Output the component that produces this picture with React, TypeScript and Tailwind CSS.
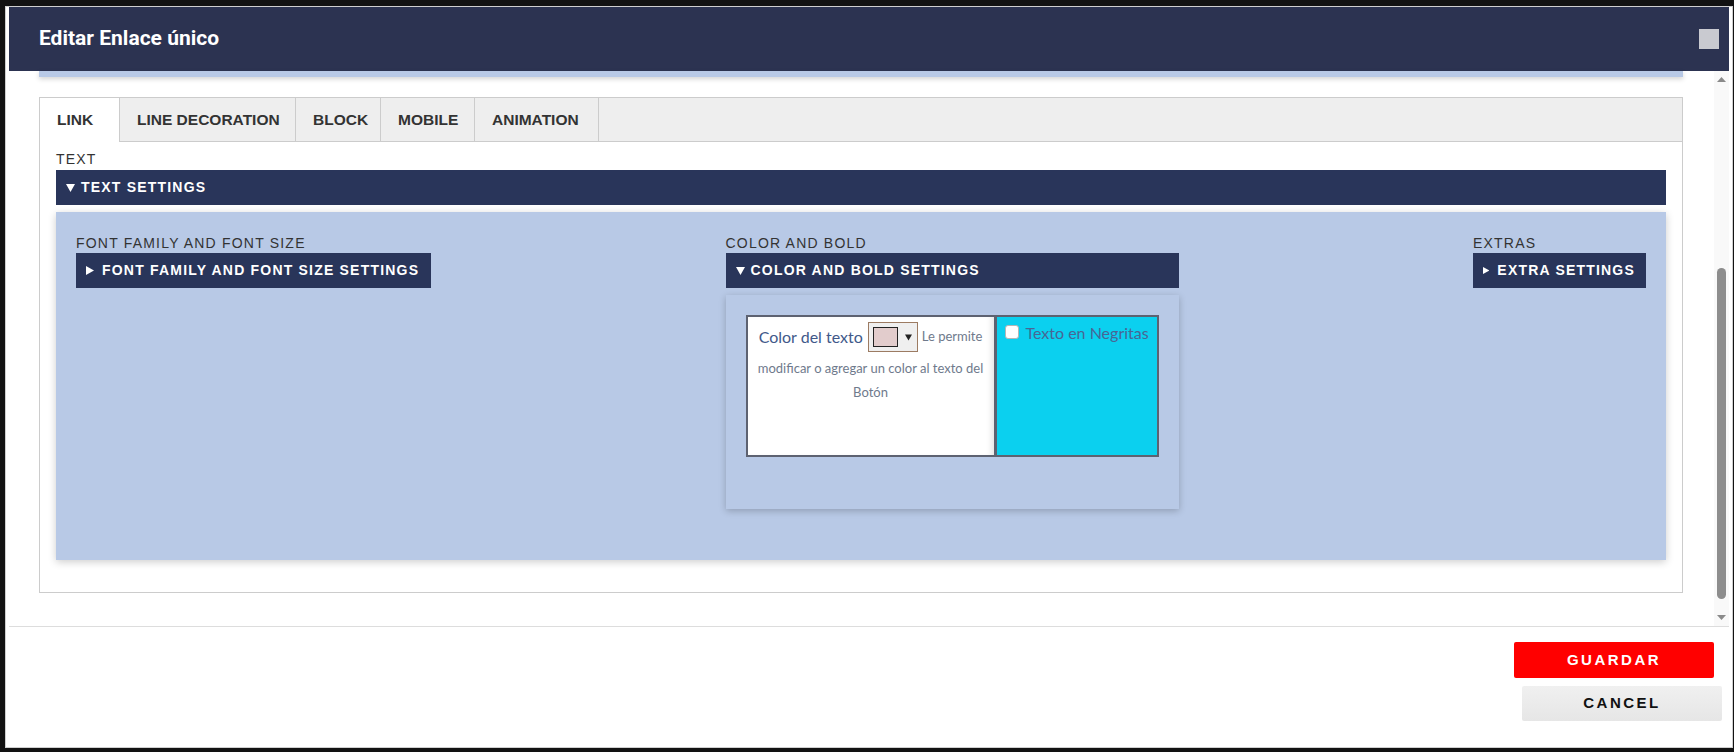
import * as React from "react";

const TABS = [
  { label: "LINK", w: "w-[80px]", active: true },
  { label: "LINE DECORATION", w: "w-[176px]", active: false },
  { label: "BLOCK", w: "w-[85px]", active: false },
  { label: "MOBILE", w: "w-[94px]", active: false },
  { label: "ANIMATION", w: "w-[124px]", active: false },
];

function TriDown({ className = "" }: { className?: string }) {
  return (
    <svg width="9" height="8" viewBox="0 0 9 8" className={className}>
      <path d="M0 0 H9 L4.5 8 Z" fill="currentColor" />
    </svg>
  );
}

function TriRight({ className = "" }: { className?: string }) {
  return (
    <svg width="8" height="9" viewBox="0 0 8 9" className={className}>
      <path d="M0 0 L8 4.5 L0 9 Z" fill="currentColor" />
    </svg>
  );
}

function SectionBar({ open, label, className = "" }: { open?: boolean; label: string; className?: string }) {
  return (
    <div
      className={
        "flex h-[35px] items-center bg-[#29355a] pl-[10px] pr-[11px] text-[14px] font-bold tracking-[1.2px] text-white " +
        className
      }
    >
      {open ? <TriDown className="mr-[6px]" /> : <TriRight className="mr-[8px]" />}
      <span className="whitespace-nowrap">{label}</span>
    </div>
  );
}

function Label({ children }: { children: React.ReactNode }) {
  return <div className="mb-[2px] text-[14px] leading-[16px] tracking-[1.2px] text-[#333]">{children}</div>;
}

function ColorCard() {
  return (
    <div className="mt-[7px] bg-[#b8c9e6] px-[20px] pb-[52px] pt-[20px] shadow-[0_2px_7px_rgba(0,0,0,0.22)]">
      <div className="flex h-[142px]">
        <div
          className="w-[250px] border-2 border-[#5d6271] bg-white pt-[5px] text-center shadow-[inset_-6px_0_6px_-4px_rgba(0,0,0,0.12)]"
          style={{ fontFamily: "Lato, 'Open Sans', sans-serif" }}
        >
          <div className="flex h-[30px] items-center justify-center">
            <span className="text-[16px] text-[#41598a]">Color del texto</span>
            <div className="ml-[5px] flex h-[30px] w-[50px] items-center border border-[#9c7b62] bg-[#efefef] pl-[4px]">
              <div className="h-[20px] w-[25px] border border-[#222] bg-[#e2cccc]" />
              <TriDown className="ml-[7px] h-[7px] w-[7px] text-[#222]" />
            </div>
            <span className="ml-[4px] text-[13px] text-[#6f7a8c]">Le permite</span>
          </div>
          <div className="mt-[4px] text-[13px] leading-[24px] text-[#6f7a8c]">
            modificar o agregar un color al texto del
            <br />
            Botón
          </div>
        </div>
        <div
          className="flex w-[163px] items-start border-2 border-l border-[#5d6271] bg-[#0bd0ef] pl-[8px] pt-[8px]"
          style={{ fontFamily: "Lato, 'Open Sans', sans-serif" }}
        >
          <div className="h-[14px] w-[14px] rounded-[3px] border border-[#b5b5b5] bg-white" />
          <span className="-mt-[4px] ml-[7px] text-[16px] text-[#486695]">Texto en Negritas</span>
        </div>
      </div>
    </div>
  );
}

function Scrollbar() {
  return (
    <div className="flex w-[15px] flex-col items-center bg-[#f9f9f9]">
      <svg width="9" height="5" viewBox="0 0 9 5" className="mt-[6px] text-[#8a8a8a]">
        <path d="M4.5 0 L9 5 H0 Z" fill="currentColor" />
      </svg>
      <div className="mt-[186px] h-[331px] w-[9px] rounded-full bg-[#8d8d8d]" />
      <svg width="9" height="5" viewBox="0 0 9 5" className="mt-[16px] text-[#8a8a8a]">
        <path d="M0 0 H9 L4.5 5 Z" fill="currentColor" />
      </svg>
    </div>
  );
}

export default function App() {
  return (
    <div
      className="h-[752px] w-[1734px] overflow-hidden bg-[#121212] pl-[5px] pt-[6px]"
      style={{ fontFamily: "'Liberation Sans', Arial, sans-serif" }}
    >
      <div className="flex h-[742px] w-[1728px] flex-col border border-[#cfcfcf] bg-white px-[3px]">
        {/* header */}
        <div className="flex h-[64px] shrink-0 items-center justify-between bg-[#2c3351] pl-[30px] pr-[10px]">
          <h1
            className="text-[21px] font-bold text-white"
            style={{ fontFamily: "Roboto, 'Liberation Sans', sans-serif" }}
          >
            Editar Enlace único
          </h1>
          <div className="h-[20px] w-[20px] bg-[#c9cad0]" />
        </div>

        {/* scroll area */}
        <div className="flex h-[555px] shrink-0">
          <div className="flex-1 pl-[30px] pr-[31px]">
            <div className="h-[6px] bg-[#b8c9e6] shadow-[0_2px_5px_rgba(0,0,0,0.18)]" />
            <div className="mt-[20px] border border-[#cccccc]">
              <div className="flex h-[44px] border-b border-[#cccccc] bg-[#eeeeee]">
                {TABS.map((t) => (
                  <div
                    key={t.label}
                    className={
                      "flex items-center border-r border-[#cccccc] pl-[17px] text-[15.5px] font-bold text-[#333] " +
                      t.w +
                      (t.active ? " -mb-px bg-white" : "")
                    }
                  >
                    {t.label}
                  </div>
                ))}
              </div>
              <div className="px-[16px] pb-[32px] pt-[9px]">
                <div className="mb-[3px] text-[14px] leading-[16px] tracking-[1.2px] text-[#333]">TEXT</div>
                <SectionBar open label="TEXT SETTINGS" className="h-[34px]" />
                <div className="mt-[7px] flex items-start justify-between bg-[#b8c9e6] px-[20px] pb-[51px] pt-[23px] shadow-[0_2px_8px_rgba(0,0,0,0.2)]">
                  <div>
                    <Label>FONT FAMILY AND FONT SIZE</Label>
                    <SectionBar label="FONT FAMILY AND FONT SIZE SETTINGS" className="w-[355px]" />
                  </div>
                  <div className="w-[453px]">
                    <Label>COLOR AND BOLD</Label>
                    <SectionBar open label="COLOR AND BOLD SETTINGS" />
                    <ColorCard />
                  </div>
                  <div>
                    <Label>EXTRAS</Label>
                    <SectionBar label="EXTRA SETTINGS" className="w-[173px]" />
                  </div>
                </div>
              </div>
            </div>
          </div>
          <Scrollbar />
        </div>

        {/* footer */}
        <div className="flex flex-1 flex-col items-end border-t border-[#dddddd] pt-[15px]">
          <button className="mr-[15px] h-[36px] w-[200px] rounded-[2px] bg-[#ff0000] text-[15px] font-bold tracking-[2.5px] text-white">
            GUARDAR
          </button>
          <button className="mr-[7px] mt-[8px] h-[35px] w-[200px] rounded-[2px] bg-gradient-to-b from-[#f0f0f0] to-[#e6e6e6] text-[15px] font-bold tracking-[2.5px] text-[#111]">
            CANCEL
          </button>
        </div>
      </div>
    </div>
  );
}
